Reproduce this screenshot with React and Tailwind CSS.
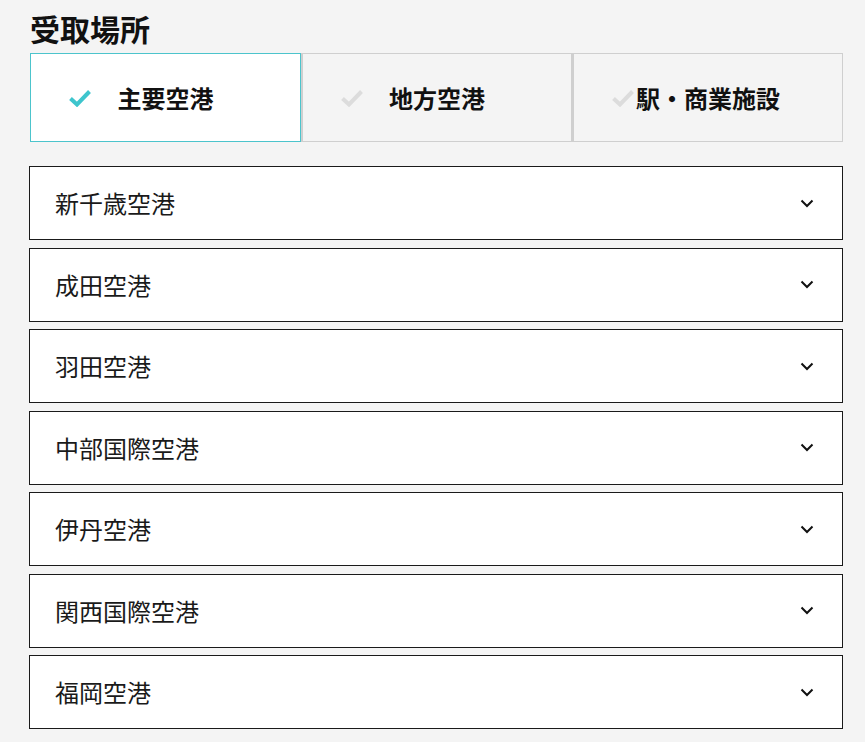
import React from "react";

const font = { fontFamily: '"Noto Sans CJK JP", "Noto Sans", sans-serif' };

function Check({ active }) {
  return (
    <svg
      width="24"
      height="18"
      viewBox="0 0 24 18"
      className="absolute left-[37px] top-1/2 -translate-y-1/2"
    >
      <path
        d="M2.5 9.5 L9 15.5 L21.5 2.5"
        fill="none"
        stroke={active ? "#3ec5cd" : "#dcdcdc"}
        strokeWidth="4"
        strokeLinecap="butt"
        strokeLinejoin="miter"
      />
    </svg>
  );
}

function Tab({ label, active }) {
  return (
    <div
      className={
        "relative flex h-[89px] items-center justify-center border " +
        (active
          ? "border-[#4cc4cc] bg-white"
          : "border-[#cfcfcf] border-l-2 bg-[#f4f4f4]")
      }
    >
      <Check active={active} />
      <span className="relative text-[24px] font-bold leading-none text-[#111]">
        {label}
      </span>
    </div>
  );
}

function Item({ label }) {
  return (
    <div className="flex h-[74px] items-center justify-between border border-[#1a1a1a] bg-white pl-[25px] pr-[28px]">
      <span className="text-[24px] leading-none text-[#1a1a1a]">{label}</span>
      <svg width="14" height="9" viewBox="0 0 14 9">
        <path
          d="M1.5 1.5 L7 7 L12.5 1.5"
          fill="none"
          stroke="#111"
          strokeWidth="2"
        />
      </svg>
    </div>
  );
}

export default function App() {
  const items = [
    "新千歳空港",
    "成田空港",
    "羽田空港",
    "中部国際空港",
    "伊丹空港",
    "関西国際空港",
    "福岡空港",
  ];
  return (
    <div className="min-h-[742px] bg-[#f4f4f4] pl-[29px] pr-[22px]" style={font}>
      <div className="pt-[10px]">
        <h1 className="pl-px text-[30px] font-bold leading-[36px] text-[#111]">
          受取場所
        </h1>
      </div>
      <div className="mt-[7px] grid grid-cols-3 gap-0 pl-px">
        <Tab label="主要空港" active />
        <Tab label="地方空港" />
        <Tab label="駅・商業施設" />
      </div>
      <div className="mt-[24px] flex flex-col gap-[7.5px]">
        {items.map((l) => (
          <Item key={l} label={l} />
        ))}
      </div>
    </div>
  );
}
